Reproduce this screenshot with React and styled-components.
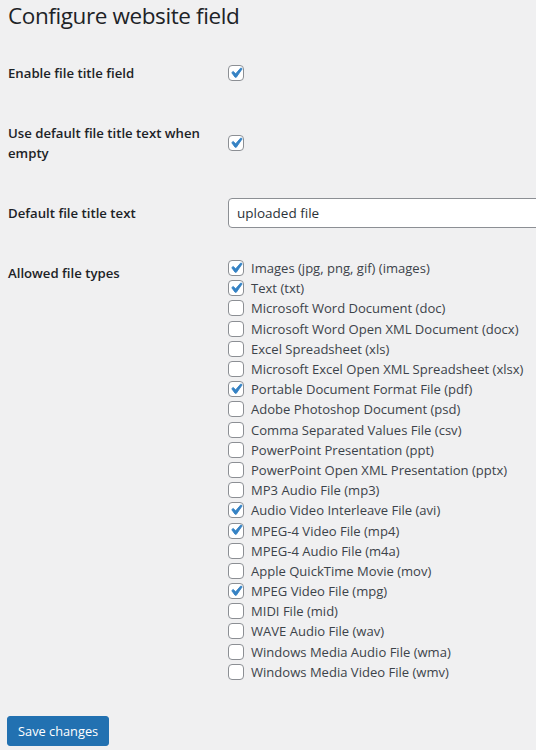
import React from "react";
import styled, { createGlobalStyle } from "styled-components";

const Global = createGlobalStyle`
  html, body { margin: 0; padding: 0; background: #f0f0f1; }
  body { overflow: hidden; font-family: "Open Sans", "Noto Sans", sans-serif; color: #1d2327; }
  * { box-sizing: border-box; }
`;

const Wrap = styled.div`
  padding: 0 0 0 8px;
  width: 536px;
  overflow: hidden;
`;

const Title = styled.h1`
  margin: 0 0 12px;
  padding-top: 1px;
  font-size: 22.5px;
  font-weight: 400;
  line-height: 30px;
  color: #1d2327;
  letter-spacing: -0.4px;
`;

const Row = styled.div`
  display: grid;
  grid-template-columns: 220px 1fr;
  min-height: ${(p) => p.$h}px;
`;

const Th = styled.div`
  padding: 20px 10px 20px 0;
  font-size: 13.2px;
  font-weight: 600;
  line-height: 20px;
  color: #1d2327;
`;

const Td = styled.div`
  display: flex;
  align-items: center;
  padding: 15px 0;
`;

const Box = styled.span`
  width: 16px;
  height: 16px;
  flex: none;
  border: 1px solid #8c8f94;
  border-radius: 4px;
  background: #fff;
  display: inline-flex;
  align-items: center;
  justify-content: center;
  overflow: visible;
`;

const Tick = styled.svg`
  flex: none;
  width: 20px;
  height: 20px;
  margin-top: -1px;
`;

const Check = ({ on }) => (
  <Box>
    {on && (
      <Tick viewBox="0 0 20 20">
        <path d="M14.83 4.89l1.34.94-5.81 8.38H9.02L5.78 9.67l1.34-1.25 2.57 2.4z" fill="#3582c4" stroke="#3582c4" strokeWidth="0.9" strokeLinejoin="round" />
      </Tick>
    )}
  </Box>
);

const Input = styled.div`
  width: 350px;
  height: 30px;
  flex: none;
  border: 1px solid #8c8f94;
  border-radius: 4px;
  background: #fff;
  padding: 0 8px;
  display: flex;
  align-items: center;
  font-size: 13.5px;
  color: #2c3338;
`;

const List = styled.div`
  display: flex;
  flex-direction: column;
`;

const Item = styled.label`
  display: flex;
  align-items: center;
  gap: 7px;
  height: 20.2px;
  font-size: 13.05px;
  color: #3c434a;
  white-space: nowrap;
`;

const Button = styled.button`
  margin-top: 19px;
  margin-left: -1px;
  height: 30px;
  padding: 0 10px;
  background: #2271b1;
  border: 1px solid #2271b1;
  border-radius: 3px;
  color: #fff;
  font-family: inherit;
  font-size: 12.8px;
`;

const types = [
  ["Images (jpg, png, gif) (images)", 1],
  ["Text (txt)", 1],
  ["Microsoft Word Document (doc)", 0],
  ["Microsoft Word Open XML Document (docx)", 0],
  ["Excel Spreadsheet (xls)", 0],
  ["Microsoft Excel Open XML Spreadsheet (xlsx)", 0],
  ["Portable Document Format File (pdf)", 1],
  ["Adobe Photoshop Document (psd)", 0],
  ["Comma Separated Values File (csv)", 0],
  ["PowerPoint Presentation (ppt)", 0],
  ["PowerPoint Open XML Presentation (pptx)", 0],
  ["MP3 Audio File (mp3)", 0],
  ["Audio Video Interleave File (avi)", 1],
  ["MPEG-4 Video File (mp4)", 1],
  ["MPEG-4 Audio File (m4a)", 0],
  ["Apple QuickTime Movie (mov)", 0],
  ["MPEG Video File (mpg)", 1],
  ["MIDI File (mid)", 0],
  ["WAVE Audio File (wav)", 0],
  ["Windows Media Audio File (wma)", 0],
  ["Windows Media Video File (wmv)", 0],
];

export default function App() {
  return (
    <Wrap>
      <Global />
      <Title>Configure website field</Title>
      <Row $h={60}>
        <Th>Enable file title field</Th>
        <Td><Check on /></Td>
      </Row>
      <Row $h={80}>
        <Th>Use default file title text when empty</Th>
        <Td><Check on /></Td>
      </Row>
      <Row $h={60}>
        <Th>Default file title text</Th>
        <Td><Input>uploaded file</Input></Td>
      </Row>
      <Row $h={60}>
        <Th>Allowed file types</Th>
        <Td>
          <List>
            {types.map(([t, on]) => (
              <Item key={t}>
                <Check on={!!on} />
                {t}
              </Item>
            ))}
          </List>
        </Td>
      </Row>
      <Button>Save changes</Button>
    </Wrap>
  );
}
